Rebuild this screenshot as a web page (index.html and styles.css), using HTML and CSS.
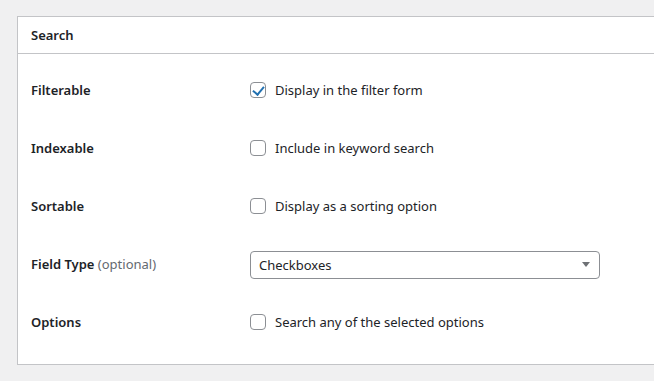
FILE: index.html
```html
<!DOCTYPE html>
<html lang="en">
  <head>
    <meta charset="UTF-8" />
    <meta name="viewport" content="width=device-width, initial-scale=1.0" />
    <title>Search settings</title>
    <link rel="stylesheet" href="styles.css">
  </head>
  <body>
    <div class="panel">
      <div class="panel-head">Search</div>
      <div class="panel-body">
        <div class="row">
          <div class="label">Filterable</div>
          <label class="check">
            <input type="checkbox" checked />
            <span>Display in the filter form</span>
          </label>
        </div>
        <div class="row">
          <div class="label">Indexable</div>
          <label class="check">
            <input type="checkbox" />
            <span>Include in keyword search</span>
          </label>
        </div>
        <div class="row">
          <div class="label">Sortable</div>
          <label class="check">
            <input type="checkbox" />
            <span>Display as a sorting option</span>
          </label>
        </div>
        <div class="row">
          <div class="label">Field Type <span class="muted">(optional)</span></div>
          <div class="select">
            <span>Checkboxes</span>
            <i class="arrow"></i>
          </div>
        </div>
        <div class="row">
          <div class="label">Options</div>
          <label class="check">
            <input type="checkbox" />
            <span>Search any of the selected options</span>
          </label>
        </div>
      </div>
    </div>
  </body>
</html>
```

FILE: styles.css
```css
* {
  margin: 0;
  padding: 0;
  box-sizing: border-box;
}
body {
  background-color: #f0f0f1;
  font-family: "Noto Sans", "Open Sans", sans-serif;
  font-size: 13px;
  color: #1d2327;
  padding: 16px 0 0 17px;
  overflow: hidden;
}
.panel {
  background-color: #fff;
  border: 1px solid #c3c4c7;
  border-right: none;
}
.panel-head {
  height: 37px;
  line-height: 36px;
  padding-left: 13px;
  font-weight: 600;
  border-bottom: 1px solid #c3c4c7;
}
.panel-body {
  padding: 7px 0 13px 13px;
}
.row {
  height: 58px;
  display: flex;
  align-items: center;
}
.label {
  width: 219px;
  font-weight: 600;
}
.muted {
  font-weight: 400;
  color: #646970;
}
.check {
  display: flex;
  align-items: center;
  gap: 9px;
}
.check input {
  appearance: none;
  width: 16px;
  height: 16px;
  border: 1px solid #8c8f94;
  border-radius: 4px;
  background-color: #fff;
  position: relative;
}
.check input:checked::after {
  content: "";
  position: absolute;
  left: 4px;
  top: 1px;
  width: 5px;
  height: 9px;
  border-right: 2px solid #2271b1;
  border-bottom: 2px solid #2271b1;
  transform: rotate(40deg);
}
.select {
  width: 350px;
  height: 28px;
  margin-top: 1px;
  border: 1px solid #8c8f94;
  border-radius: 4px;
  display: flex;
  align-items: center;
  justify-content: space-between;
  padding: 0 9px 0 8px;
}
.arrow {
  width: 0;
  height: 0;
  border-left: 4px solid transparent;
  border-right: 4px solid transparent;
  border-top: 5px solid #6e7175;
}
```
